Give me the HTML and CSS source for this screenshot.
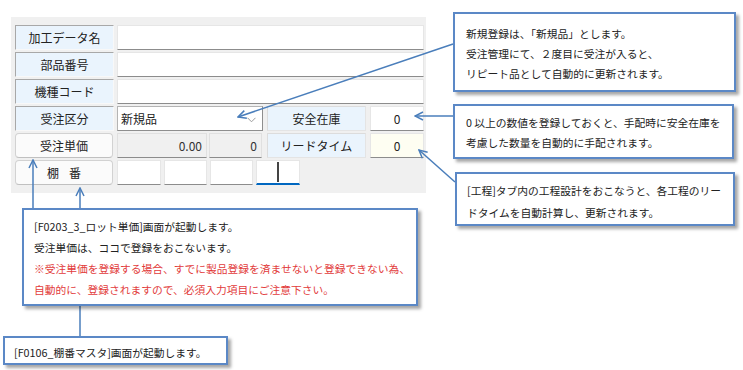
FILE: index.html
```html
<!DOCTYPE html>
<html lang="ja">
<head>
<meta charset="utf-8">
<link rel="stylesheet" href="styles.css">
</head>
<body>
<div class="canvas">
  <div class="panel">
    <div class="row">
      <div class="label">加工データ名</div>
      <div class="field wide"></div>
    </div>
    <div class="row">
      <div class="label">部品番号</div>
      <div class="field wide"></div>
    </div>
    <div class="row">
      <div class="label">機種コード</div>
      <div class="field wide"></div>
    </div>
    <div class="row">
      <div class="label">受注区分</div>
      <div class="select"><span>新規品</span><span class="chev"><svg width="9" height="6" viewBox="0 0 9 6"><path d="M0.5 0.8 L4.5 4.8 L8.5 0.8" fill="none" stroke="#9a9a9a" stroke-width="1"/></svg></span></div>
      <div class="label mid">安全在庫</div>
      <div class="field num">0</div>
    </div>
    <div class="row">
      <div class="button">受注単価</div>
      <div class="field ro price">0.00</div>
      <div class="field ro lot">0</div>
      <div class="label mid2">リードタイム</div>
      <div class="field num yellow">0</div>
    </div>
    <div class="row">
      <div class="button"><span class="sp">棚</span>番</div>
      <div class="shelves">
        <div class="field box b44"></div>
        <div class="field box b43"></div>
        <div class="field box b43"></div>
        <div class="field box b44 focus"><span class="caret"></span></div>
      </div>
    </div>
  </div>

  <svg class="arrows" width="743" height="370" viewBox="0 0 743 370">
    <defs>
      <marker id="ah" markerWidth="10" markerHeight="10" refX="9" refY="5" orient="auto" markerUnits="userSpaceOnUse">
        <path d="M1 1 L9 5 L1 9" fill="none" stroke="#4a7ebb" stroke-width="1.5"/>
      </marker>
    </defs>
    <line x1="453" y1="44" x2="238" y2="117" stroke="#4a7ebb" stroke-width="1.5" marker-end="url(#ah)"/>
    <line x1="453" y1="116" x2="415" y2="116" stroke="#4a7ebb" stroke-width="1.5" marker-end="url(#ah)"/>
    <line x1="455" y1="182" x2="419" y2="150" stroke="#4a7ebb" stroke-width="1.5" marker-end="url(#ah)"/>
    <line x1="33" y1="208" x2="33" y2="160" stroke="#4a7ebb" stroke-width="1.5" marker-end="url(#ah)"/>
    <line x1="80" y1="336" x2="80" y2="188" stroke="#4a7ebb" stroke-width="1.5" marker-end="url(#ah)"/>
  </svg>

  <div class="note n1">
    <p>新規登録は、「新規品」とします。</p>
    <p>受注管理にて、２度目に受注が入ると、</p>
    <p>リピート品として自動的に更新されます。</p>
  </div>
  <div class="note n2">
    <p>0 以上の数値を登録しておくと、手配時に安全在庫を</p>
    <p>考慮した数量を自動的に手配されます。</p>
  </div>
  <div class="note n3">
    <p>[工程]タブ内の工程設計をおこなうと、各工程のリー</p>
    <p>ドタイムを自動計算し、更新されます。</p>
  </div>
  <div class="note n4">
    <p>[F0203_3_ロット単価]画面が起動します。</p>
    <p>受注単価は、ココで登録をおこないます。</p>
    <p class="red">※受注単価を登録する場合、すでに製品登録を済ませないと登録できない為、</p>
    <p class="red">自動的に、登録されますので、必須入力項目にご注意下さい。</p>
  </div>
  <div class="note n5">
    <p>[F0106_棚番マスタ]画面が起動します。</p>
  </div>
</div>
</body>
</html>
```
FILE: styles.css
```css
* { box-sizing: border-box; }
html, body { margin: 0; padding: 0; background: #ffffff; }
body {
  font-family: "Noto Sans CJK JP", "Noto Sans", sans-serif;
  color: #222;
}
.canvas {
  position: relative;
  width: 743px;
  height: 370px;
  overflow: hidden;
}
.panel {
  position: relative;
  top: 17px;
  left: 11px;
  width: 415px;
  background: #f0f0f0;
  padding: 8px 0 8px 4px;
  display: flex;
  flex-direction: column;
  gap: 2px;
  font-size: 12px;
}
.row {
  display: flex;
  height: 25px;
  align-items: stretch;
}
.label {
  width: 99px;
  background: #eaf4fd;
  border-top: 1px solid #a8a8a8;
  border-left: 1px solid #a8a8a8;
  border-right: 1px solid #f8f8f8;
  border-bottom: 1px solid #f8f8f8;
  display: flex;
  align-items: center;
  justify-content: center;
  margin-right: 3px;
}
.label.mid { margin: 0 4px 0 4px; border-color: #e4e4e4; border-top-color: #dcdcdc; border-left-color: #dcdcdc; }
.label.mid2 { margin: 0 4px 0 5px; border-color: #e4e4e4; border-top-color: #dcdcdc; border-left-color: #dcdcdc; }
.field {
  background: #ffffff;
  border: 1px solid #e6e6e6;
  border-bottom: 1px solid #8c8c8c;
  display: flex;
  align-items: center;
  padding: 0 4px;
}
.field.wide { width: 307px; }
.field.num { width: 54px; justify-content: center; }
.field.yellow { background: #fefef2; }
.field.ro { background: #f0f0f0; justify-content: flex-end; border: 1px solid #e0e0e0; border-bottom: 1px solid #8c8c8c; color: #333; }
.field.price { width: 90px; }
.field.lot { width: 53px; margin-left: 2px; }
.select {
  width: 146px;
  background: #fff;
  border: 1px solid #8e8e8e;
  border-top-color: #b4b4b4;
  border-left-color: #b4b4b4;
  display: flex;
  align-items: center;
  justify-content: space-between;
  padding: 0 6px 0 3px;
}
.chev { display: flex; align-items: center; margin-top: 3px; }
.button {
  width: 98px;
  background: #fbfbfb;
  border: 1px solid #d2d2d2;
  border-bottom-color: #c0c0c0;
  border-radius: 4px;
  display: flex;
  align-items: center;
  justify-content: center;
  margin-right: 4px;
}
.button .sp { margin-right: 10px; }
.shelves { display: flex; gap: 3px; }
.field.box { padding: 0; justify-content: center; }
.b44 { width: 44px; }
.b43 { width: 43px; }
.field.focus { border-bottom: 2px solid #0067c0; }
.caret {
  display: block;
  width: 2px;
  height: 20px;
  background: #444;
}
.arrows {
  position: absolute;
  left: 0;
  top: 0;
  pointer-events: none;
}
.note {
  position: absolute;
  background: #ffffff;
  border: 2px solid #5b88c6;
  box-shadow: 3px 3px 3px rgba(0, 0, 0, 0.35);
  font-size: 10.75px;
  line-height: 20px;
  color: #222;
}
.note p { margin: 0; white-space: nowrap; }
.note .red { color: #e23b3b; }
.n1 { left: 453px; top: 12px; width: 283px; height: 80px; padding: 10px 0 0 11px; }
.n2 { left: 453px; top: 104px; width: 281px; height: 55px; padding: 7px 0 0 11px; }
.n3 { left: 455px; top: 172px; width: 280px; height: 54px; padding: 6px 0 0 10px; line-height: 22px; }
.n4 { left: 22px; top: 208px; width: 396px; height: 98px; padding: 6px 0 0 10px; line-height: 21px; }
.n5 { left: 3px; top: 336px; width: 225px; height: 29px; padding: 5px 0 0 9px; }
```
